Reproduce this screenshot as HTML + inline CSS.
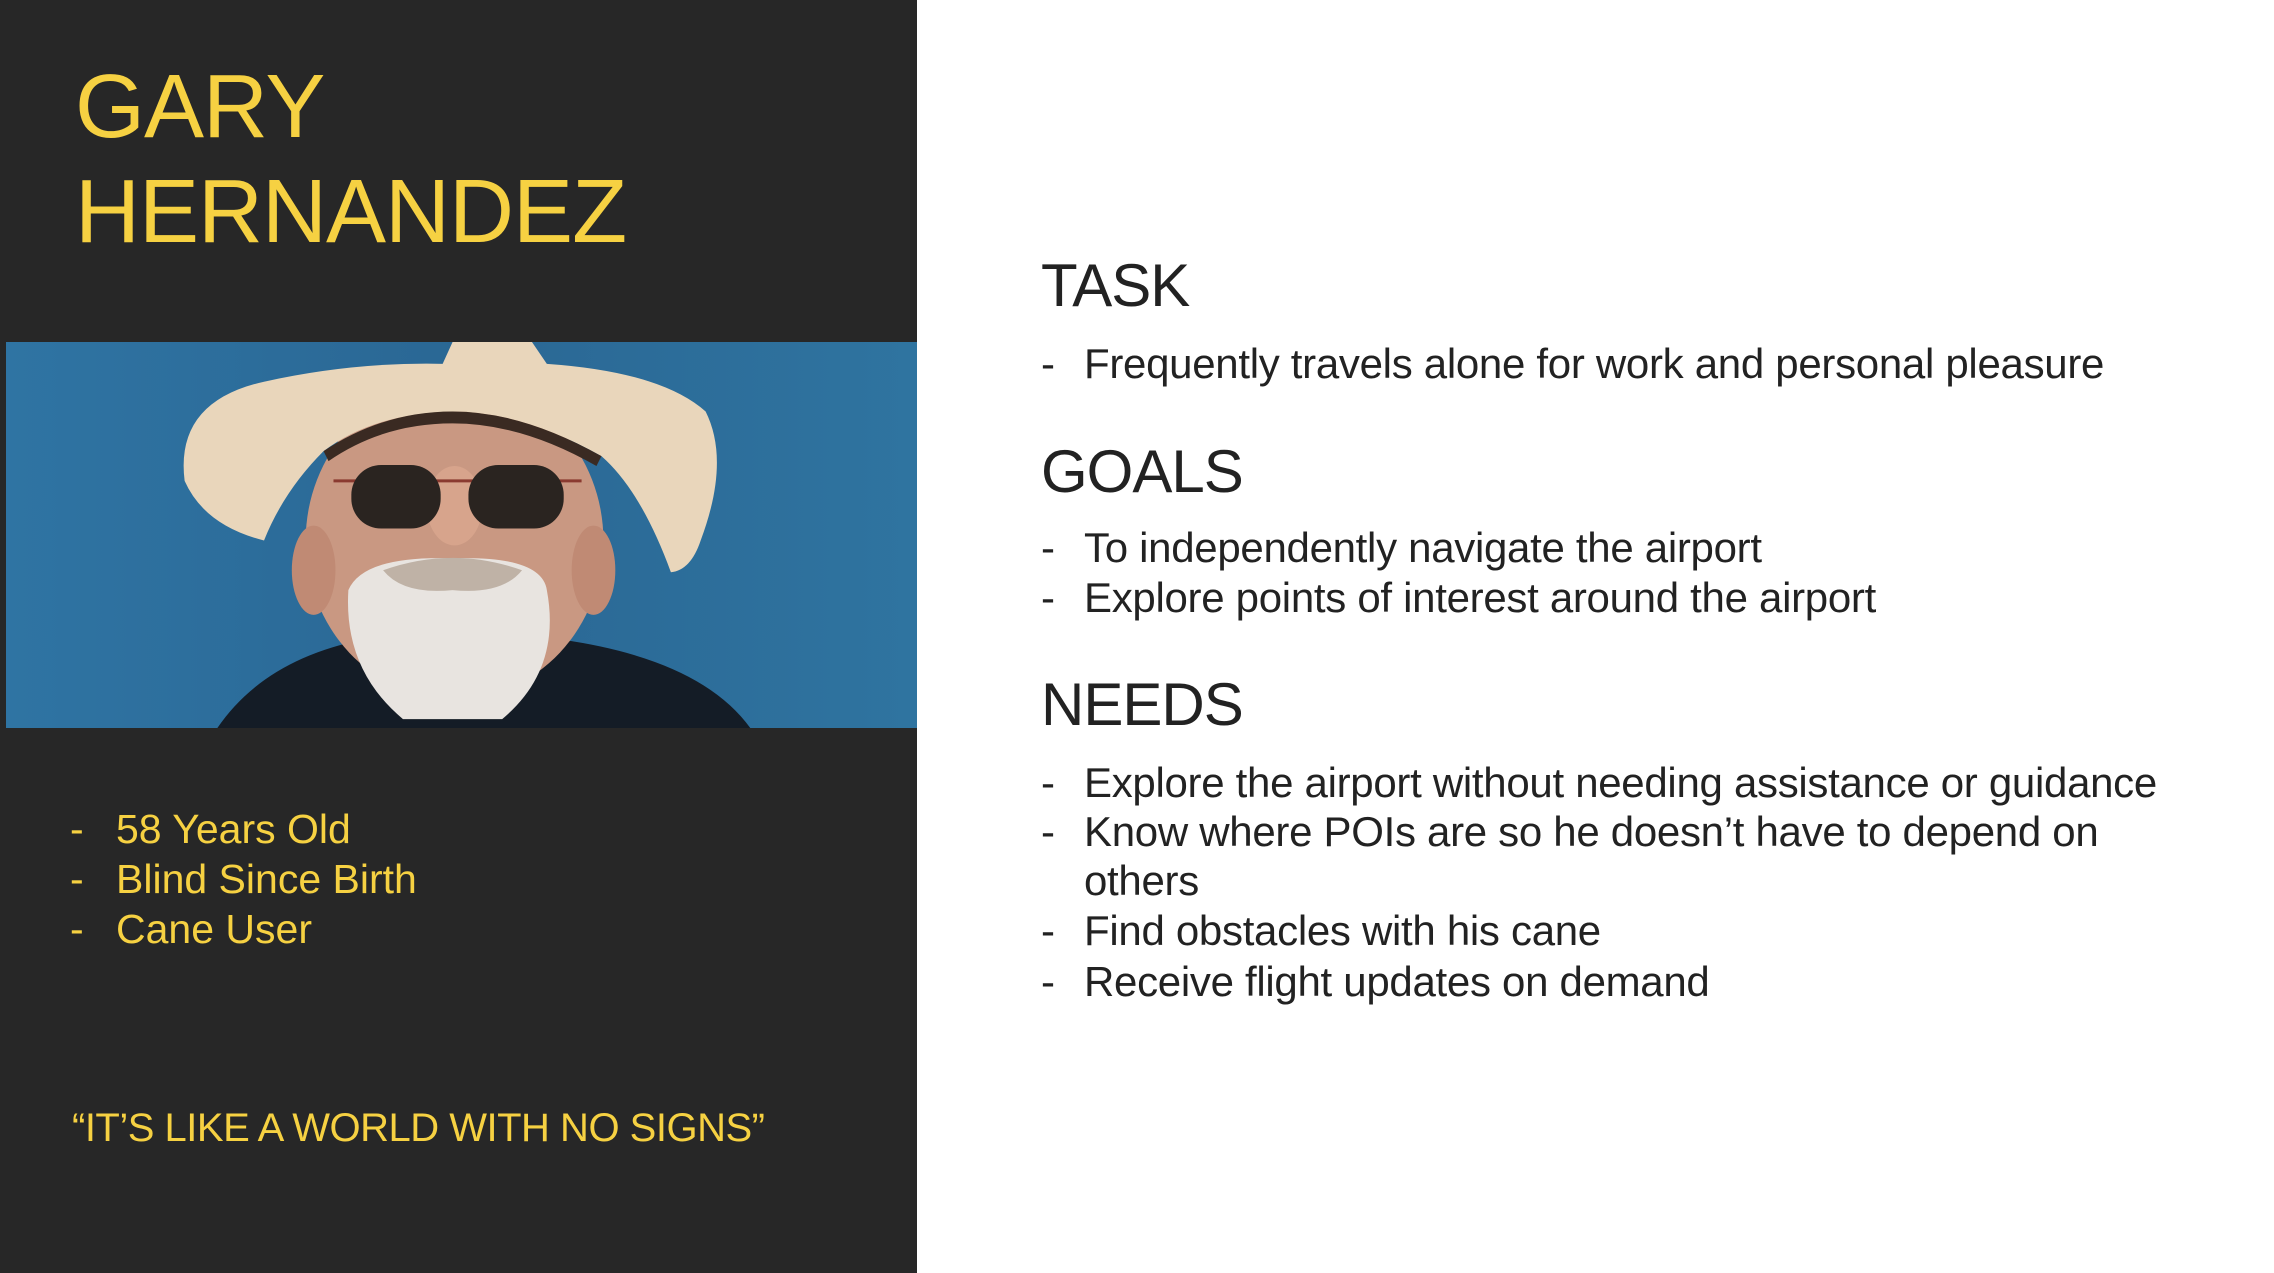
<!DOCTYPE html>
<html><head><meta charset="utf-8"><style>
*{margin:0;padding:0;box-sizing:border-box}
body{width:2274px;height:1273px;background:#fff;position:relative;overflow:hidden;font-family:"Liberation Sans",sans-serif}
.panel{position:absolute;left:0;top:0;width:917px;height:1273px;background:#272727}
.y{color:#f6d142;position:absolute;white-space:nowrap}
.name{font-size:90px;left:75px;line-height:1;letter-spacing:-1px}
.yb{font-size:41px;left:70px}
.yb span{position:absolute;left:0}
.yb b{font-weight:normal;position:absolute;left:46px}
.photo{position:absolute;left:6px;top:342px;width:911px;height:386px}
.r{position:absolute;left:1041px;color:#222;white-space:nowrap}
.h{font-size:60px;letter-spacing:-1px}
.li{font-size:42px;letter-spacing:-0.3px}
.li span{position:absolute;left:0}
.li b{font-weight:normal;position:absolute;left:43px}
</style></head><body>
<div class="panel"></div>
<div class="y name" style="top:62px">GARY</div>
<div class="y name" style="top:167px">HERNANDEZ</div>
<svg class="photo" viewBox="0 0 918 389" preserveAspectRatio="none">
<defs><linearGradient id="bg" x1="0" x2="1"><stop offset="0" stop-color="#2f74a3"/><stop offset=".5" stop-color="#2a6794"/><stop offset="1" stop-color="#2f74a0"/></linearGradient></defs>
<rect width="918" height="389" fill="url(#bg)"/>
<path d="M213 389 Q260 320 360 300 L560 300 Q700 320 750 389Z" fill="#141c26"/>
<ellipse cx="452" cy="200" rx="150" ry="160" fill="#c99882"/>
<ellipse cx="310" cy="230" rx="22" ry="45" fill="#c08a74"/>
<ellipse cx="592" cy="230" rx="22" ry="45" fill="#c08a74"/>
<path d="M345 250 Q360 215 450 218 Q540 215 545 250 Q560 330 500 380 L400 380 Q340 330 345 250Z" fill="#e8e4e0"/>
<path d="M380 230 Q450 205 520 230 Q500 255 450 250 Q400 255 380 230Z" fill="#bfb2a6"/>
<ellipse cx="452" cy="165" rx="28" ry="40" fill="#d7a48c"/>
<path d="M330 140 L580 140" stroke="#8a3a30" stroke-width="3"/>
<rect x="348" y="124" width="90" height="64" rx="30" fill="#2a2420"/>
<rect x="466" y="124" width="96" height="64" rx="30" fill="#2a2420"/>
<path d="M180 140 Q170 60 260 40 Q350 20 440 22 L450 0 L530 0 L545 22 Q660 30 705 70 Q730 120 700 200 Q690 230 670 232 Q640 150 600 115 Q520 70 450 70 Q370 72 320 110 Q280 150 260 200 Q200 185 180 140Z" fill="#e9d6bb"/>
<path d="M320 110 Q380 70 450 70 Q520 70 600 115 L595 125 Q520 82 450 82 Q380 82 325 120Z" fill="#3a2a22"/>
</svg>
<div class="y yb" style="top:806px"><span>-</span><b>58 Years Old</b></div>
<div class="y yb" style="top:856px"><span>-</span><b>Blind Since Birth</b></div>
<div class="y yb" style="top:906px"><span>-</span><b>Cane User</b></div>
<div class="y" style="top:1106px;left:72px;font-size:40px;letter-spacing:-0.5px">“IT’S LIKE A WORLD WITH NO SIGNS”</div>

<div class="r h" style="top:251px">TASK</div>
<div class="r li" style="top:340px"><span>-</span><b>Frequently travels alone for work and personal pleasure</b></div>
<div class="r h" style="top:437px">GOALS</div>
<div class="r li" style="top:524px"><span>-</span><b>To independently navigate the airport</b></div>
<div class="r li" style="top:574px"><span>-</span><b>Explore points of interest around the airport</b></div>
<div class="r h" style="top:670px">NEEDS</div>
<div class="r li" style="top:759px"><span>-</span><b>Explore the airport without needing assistance or guidance</b></div>
<div class="r li" style="top:808px"><span>-</span><b>Know where POIs are so he doesn’t have to depend on</b></div>
<div class="r li" style="top:857px"><b>others</b></div>
<div class="r li" style="top:907px"><span>-</span><b>Find obstacles with his cane</b></div>
<div class="r li" style="top:958px"><span>-</span><b>Receive flight updates on demand</b></div>
</body></html>
